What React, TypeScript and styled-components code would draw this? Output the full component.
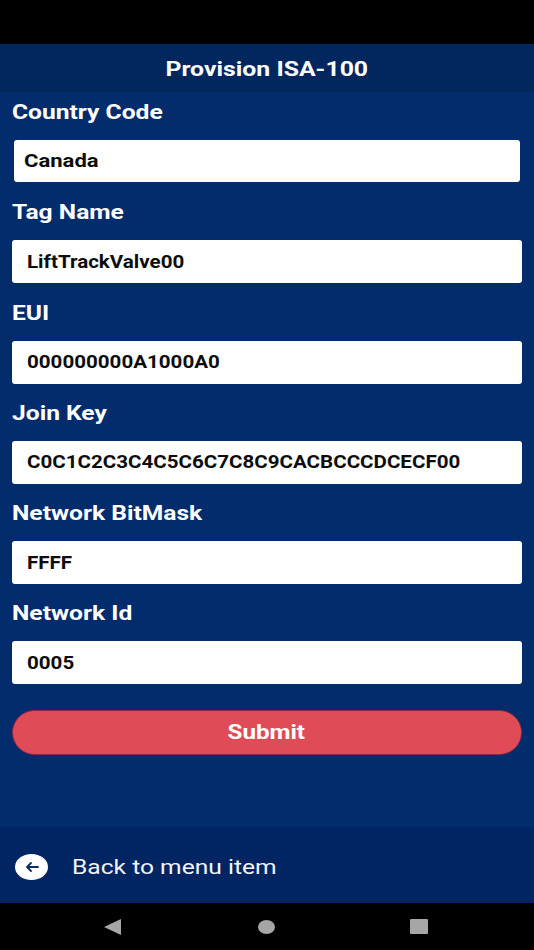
import styled, { createGlobalStyle } from 'styled-components';

const GlobalStyle = createGlobalStyle`
  html, body {
    margin: 0;
    padding: 0;
    background: #000;
  }
  * {
    box-sizing: border-box;
  }
`;

const fields = [
  { label: 'Country Code', value: 'Canada', first: true },
  { label: 'Tag Name', value: 'LiftTrackValve00' },
  { label: 'EUI', value: '000000000A1000A0' },
  { label: 'Join Key', value: 'C0C1C2C3C4C5C6C7C8C9CACBCCCDCECF00' },
  { label: 'Network BitMask', value: 'FFFF' },
  { label: 'Network Id', value: '0005' },
];

const App = () => {
  return (
    <Wrapper>
      <GlobalStyle />
      <StatusBar />
      <Header>
        <HeaderText>Provision ISA-100</HeaderText>
      </Header>
      <Main>
        {fields.map((f) => (
          <Field key={f.label}>
            <Label>{f.label}</Label>
            <ValueBox $first={f.first}>
              <ValueText $first={f.first}>{f.value}</ValueText>
            </ValueBox>
          </Field>
        ))}
        <SubmitButton>
          <SubmitText>Submit</SubmitText>
        </SubmitButton>
      </Main>
      <Footer>
        <BackIcon>
          <svg width="16" height="12" viewBox="0 0 16 12" fill="none">
            <path
              d="M14 6H3M7 2L3 6l4 4"
              stroke="#0b2b66"
              strokeWidth="1.8"
              strokeLinecap="round"
              strokeLinejoin="round"
            />
          </svg>
        </BackIcon>
        <BackText>Back to menu item</BackText>
      </Footer>
      <NavBar>
        <svg width="18" height="16" viewBox="0 0 18 16">
          <path d="M0 8L17 0v16z" fill="#a6a6a6" />
        </svg>
        <HomeDot />
        <RecentSquare />
      </NavBar>
    </Wrapper>
  );
};

const Wrapper = styled.div`
  width: 534px;
  height: 950px;
  display: flex;
  flex-direction: column;
  background: #022c6c;
  font-family: Roboto, 'Liberation Sans', sans-serif;
  overflow: hidden;
`;
const StatusBar = styled.div`
  height: 44px;
  background: #000;
`;
const Header = styled.div`
  height: 48px;
  padding-top: 1px;
  display: flex;
  align-items: center;
  justify-content: center;
  background: #02275f;
`;
const HeaderText = styled.span`
  color: #fff;
  font-size: 20.5px;
  font-weight: 700;
  transform: scaleX(1.21);
`;
const Main = styled.div`
  flex: 1;
  padding: 0 12.5px 0 12px;
`;
const Field = styled.div`
  height: 100.25px;
`;
const Label = styled.div`
  width: fit-content;
  height: 48px;
  padding-top: 7px;
  color: #fff;
  font-size: 20.5px;
  font-weight: 700;
  line-height: 26px;
  transform: scaleX(1.2);
  transform-origin: left;
`;
const ValueBox = styled.div<{ $first?: boolean }>`
  height: ${(p) => (p.$first ? '42px' : '43px')};
  margin: ${(p) => (p.$first ? '0 1.5px' : '0')};
  padding-left: ${(p) => (p.$first ? '10.5px' : '15px')};
  display: flex;
  align-items: center;
  background: #fff;
  border-radius: 3px;
`;
const ValueText = styled.span<{ $first?: boolean }>`
  color: #0d0d0d;
  font-size: 17.5px;
  font-weight: 700;
  transform: scaleX(${(p) => (p.$first ? 1.26 : 1.175)});
  transform-origin: left;
`;
const SubmitButton = styled.div`
  height: 45px;
  margin-top: 16.5px;
  display: flex;
  align-items: center;
  justify-content: center;
  background: #e04b58;
  border: 1.5px solid #8c2745;
  border-radius: 23px;
`;
const SubmitText = styled.span`
  color: #fff;
  font-size: 19.5px;
  font-weight: 700;
  transform: scaleX(1.24);
`;
const Footer = styled.div`
  height: 76px;
  display: flex;
  align-items: center;
  padding: 4px 0 0 15px;
  background: #012562;
`;
const BackIcon = styled.div`
  width: 33px;
  height: 26px;
  display: flex;
  align-items: center;
  justify-content: center;
  background: #fff;
  border-radius: 50%;
`;
const BackText = styled.div`
  margin-left: 24px;
  color: #f2f5fa;
  font-size: 20.5px;
  transform: scaleX(1.2);
  transform-origin: left;
`;
const NavBar = styled.div`
  height: 47px;
  display: flex;
  align-items: center;
  padding-left: 104px;
  gap: 136px;
  background: #000;
`;
const HomeDot = styled.div`
  width: 17px;
  height: 14px;
  margin-right: -1px;
  background: #a6a6a6;
  border-radius: 50%;
`;
const RecentSquare = styled.div`
  width: 18px;
  height: 15px;
  background: #a6a6a6;
  border-radius: 1px;
`;

export default App;
